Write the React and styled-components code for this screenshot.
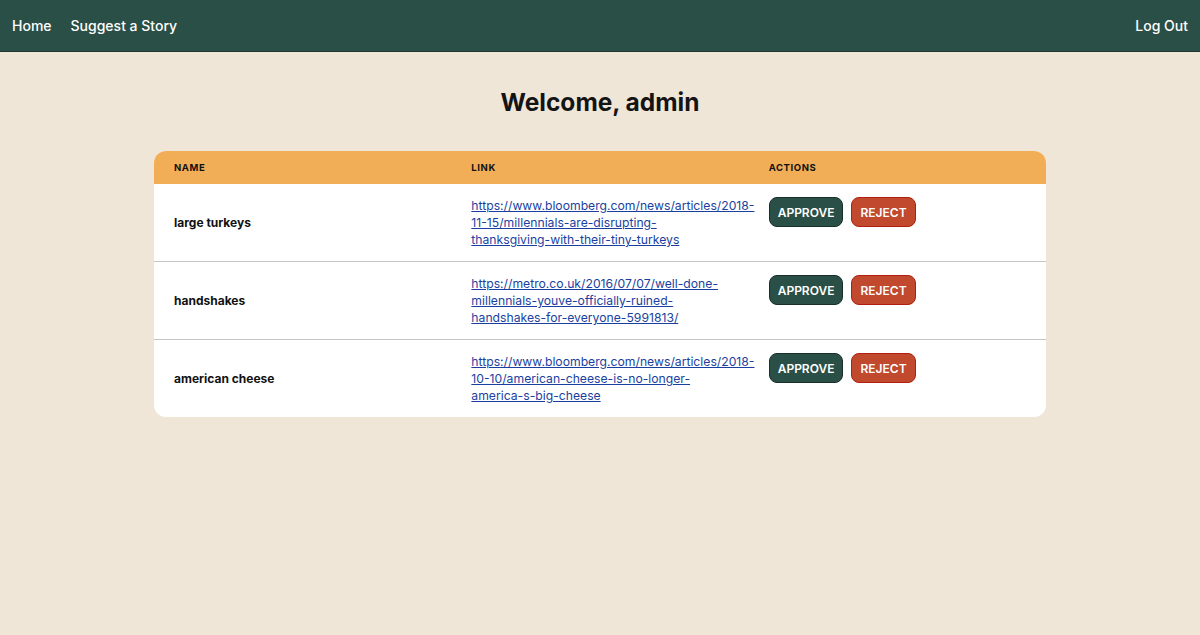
import React from 'react';
import styled, { createGlobalStyle } from 'styled-components';

const GlobalStyle = createGlobalStyle`
  body {
    margin: 0;
    background: #f0e6d8;
    font-family: Inter, "Noto Sans", sans-serif;
    color: #111;
  }
`;

const Nav = styled.nav`
  display: flex;
  align-items: center;
  justify-content: space-between;
  height: 51px;
  padding: 0 12px;
  background: #2a4f47;
  border-bottom: 1px solid #1c3630;
`;

const NavGroup = styled.div`
  display: flex;
  gap: 19px;
`;

const NavLink = styled.a`
  color: #fff;
  font-size: 14px;
  font-weight: 500;
  text-decoration: none;
  cursor: pointer;
`;

const Main = styled.main`
  display: flex;
  flex-direction: column;
  align-items: center;
  padding-top: 35px;
`;

const Title = styled.h1`
  margin: 0 0 34px;
  font-size: 24.5px;
  font-weight: 700;
  color: #141414;
`;

const Table = styled.table`
  width: 892px;
  border-collapse: separate;
  border-spacing: 0;
  background: #fff;
  border-radius: 12px;
  overflow: hidden;
  table-layout: fixed;
`;

const Th = styled.th`
  background: #f2ae57;
  text-align: left;
  font-size: 9.5px;
  font-weight: 700;
  letter-spacing: 0.6px;
  text-transform: uppercase;
  padding: 11px 10px 11px 20px;
  height: 11px;
`;

const Td = styled.td`
  padding: 13px 20px;
  vertical-align: ${(p) => (p.$top ? 'top' : 'middle')};
  border-top: ${(p) => (p.$first ? 'none' : '1px solid #c4c4c4')};
  font-size: 12px;
`;

const Name = styled.span`
  font-weight: 700;
`;

const StoryLink = styled.a`
  color: #1a3fa0;
  font-size: 12.2px;
  line-height: 17px;
  text-decoration: underline;
  white-space: normal;
`;

const Actions = styled.div`
  display: flex;
  gap: 8px;
`;

const Button = styled.button`
  height: 30px;
  padding: 0 8px;
  border-radius: 8px;
  font-family: inherit;
  font-size: 12px;
  font-weight: 600;
  text-transform: uppercase;
  color: #fff;
  background: ${(p) => (p.$danger ? '#c0492e' : '#2a4f47')};
  border: 1px solid ${(p) => (p.$danger ? '#b01f12' : '#1a2f2a')};
  cursor: pointer;
`;

const stories = [
  {
    name: 'large turkeys',
    url: 'https://www.bloomberg.com/news/articles/2018-11-15/millennials-are-disrupting-thanksgiving-with-their-tiny-turkeys',
  },
  {
    name: 'handshakes',
    url: 'https://metro.co.uk/2016/07/07/well-done-millennials-youve-officially-ruined-handshakes-for-everyone-5991813/',
  },
  {
    name: 'american cheese',
    url: 'https://www.bloomberg.com/news/articles/2018-10-10/american-cheese-is-no-longer-america-s-big-cheese',
  },
];

const App = () => (
  <>
    <GlobalStyle />
    <Nav>
      <NavGroup>
        <NavLink>Home</NavLink>
        <NavLink>Suggest a Story</NavLink>
      </NavGroup>
      <NavLink>Log Out</NavLink>
    </Nav>
    <Main>
      <Title>Welcome, admin</Title>
      <Table>
        <thead>
          <tr>
            <Th>Name</Th>
            <Th>Link</Th>
            <Th>Actions</Th>
          </tr>
        </thead>
        <tbody>
          {stories.map((s, i) => (
            <tr key={s.name}>
              <Td $first={i === 0}>
                <Name>{s.name}</Name>
              </Td>
              <Td $first={i === 0}>
                <StoryLink href={s.url}>{s.url}</StoryLink>
              </Td>
              <Td $first={i === 0} $top>
                <Actions>
                  <Button>Approve</Button>
                  <Button $danger>Reject</Button>
                </Actions>
              </Td>
            </tr>
          ))}
        </tbody>
      </Table>
    </Main>
  </>
);

export default App;
